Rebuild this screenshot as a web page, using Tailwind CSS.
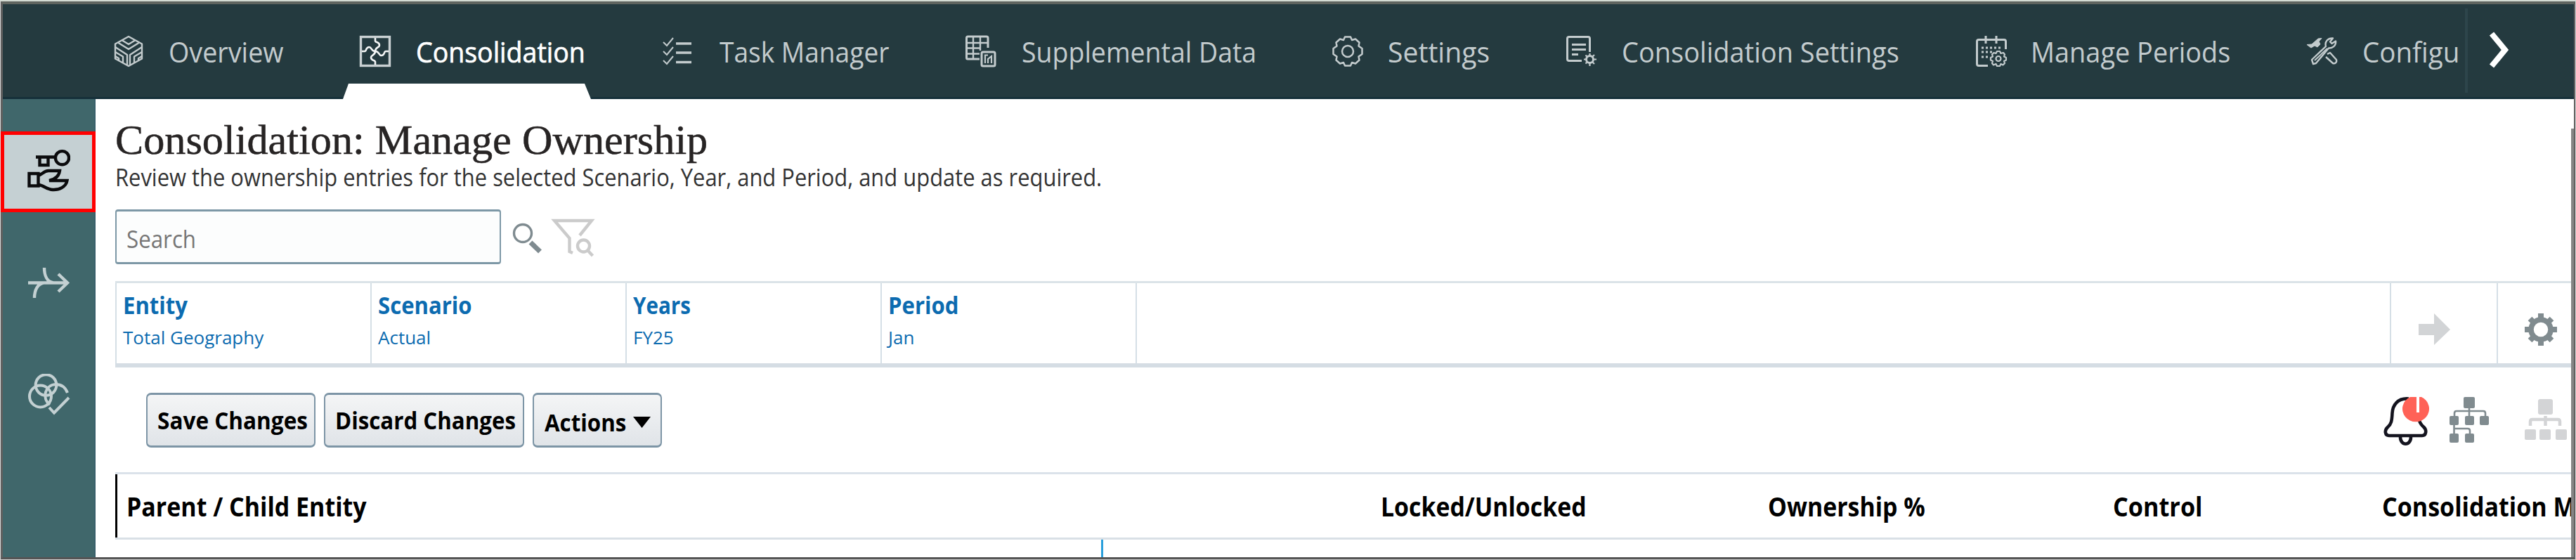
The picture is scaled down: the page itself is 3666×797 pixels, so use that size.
<!DOCTYPE html>
<html lang="en">
<head>
<meta charset="utf-8">
<title>Consolidation: Manage Ownership</title>
<script src="https://cdn.jsdelivr.net/npm/@tailwindcss/browser@4"></script>
</head>
<body class="bg-white">
<div class="w-[3666px] h-[797px] overflow-hidden border-t-2 border-t-[#d3dbd3] border-b border-b-[#d0d0d0] border-l border-l-[#d8d8d8] border-r border-r-[#d8d8d8] font-['Open_Sans',sans-serif] whitespace-nowrap">
<div class="h-full flex flex-col border-t-[4px] border-t-[#5f645f] border-b-[3px] border-b-[#555555] border-l-[3px] border-l-[#606060] border-r-2 border-r-[#606060]">

  <!-- Top navigation -->
  <header class="relative flex-none h-[135px] flex bg-[#243a3f] border-b-[3px] border-b-[#16303a] text-[41px] text-[#c3cbcd]">
    <nav class="flex-none w-[3497px] pl-[156px] flex items-center overflow-hidden pt-[2px]">
      <a class="flex-none w-[351px] flex items-center">
        <svg class="flex-none w-[46px] h-[46px]" viewBox="0 0 46 46" fill="none" stroke="currentColor" stroke-width="2.4" stroke-linejoin="round"><path d="M23 2 42 12.500V33.500L23 44 4 33.500V12.500Z"/><path d="M14 7.500 23 13 32 7.500M8.500 11 23 20 37.500 11M4 17 21 28V43M42 17 25 28V43M4 24 15 30.500V39M42 24 31 30.500V39M4 30 9 33V36M42 30 37 33V36"/></svg>
        <span class="ml-[34px] leading-none origin-left scale-x-[.92]">Overview</span>
      </a>
      <a class="flex-none w-[429px] flex items-center text-white">
        <svg class="flex-none w-[46px] h-[46px] text-[#c9d0d2]" viewBox="0 0 46 46" fill="none" stroke="currentColor"><rect x="2.500" y="2.500" width="41" height="41" stroke-width="3.400"/><g stroke="#f4f6f6" stroke-width="2.600"><path d="M23 4V8C23 11 29 9 29 14.500C29 18 23 17 23 23"/><path d="M23 4V8C23 11 29 9 29 14.500C29 18 23 17 23 23" transform="rotate(90 23 23)"/><path d="M23 4V8C23 11 29 9 29 14.500C29 18 23 17 23 23" transform="rotate(180 23 23)"/><path d="M23 4V8C23 11 29 9 29 14.500C29 18 23 17 23 23" transform="rotate(270 23 23)"/></g></svg>
        <span class="ml-[35px] leading-none origin-left scale-x-[.915] [-webkit-text-stroke:0.7px_white]">Consolidation</span>
      </a>
      <a class="flex-none w-[433px] flex items-center">
        <svg class="flex-none w-[46px] h-[46px]" viewBox="0 0 46 46" fill="none" stroke="currentColor"><path stroke-width="2" d="M4 10 9 15 18 4M4 23 9 28 18 17M4 36 9 41 18 30"/><path stroke-width="3.600" d="M22 12H44M22 25H44M22 38.500H44"/></svg>
        <span class="ml-[38px] leading-none origin-left scale-x-[.905]">Task Manager</span>
      </a>
      <a class="flex-none w-[522px] flex items-center">
        <svg class="flex-none w-[46px] h-[46px]" viewBox="0 0 46 46" fill="none" stroke="currentColor"><path stroke-width="3" d="M21 34H4Q2.500 34 2.500 32V4Q2.500 2 4.500 2H31Q33 2 33 4V18"/><path stroke-width="2.400" d="M3 11H32M3 18.500H23M3 26.500H21M12 3V34M22 3V22"/><rect x="24" y="24" width="19" height="20" rx="2" stroke-width="3"/><path stroke-width="2.200" d="M29 40V28.500H33M33 40V34L38 30V40"/></svg>
        <span class="ml-[35px] leading-none origin-left scale-x-[.914]">Supplemental Data</span>
      </a>
      <a class="flex-none w-[332px] flex items-center">
        <svg class="flex-none w-[46px] h-[46px]" viewBox="0 0 46 46" fill="none" stroke="currentColor" stroke-width="2.500" stroke-linejoin="round"><circle cx="23" cy="23" r="8"/><path d="M19 2.500H27L29 7 34 5.500 39.500 10.500 38.500 15.500 43.500 19V27L38.500 30.500 39.500 35.500 34 40.500 29 39 27 43.500H19L17 39 12 40.500 6.500 35.500 7.500 30.500 2.500 27V19L7.500 15.500 6.500 10.500 12 5.500 17 7Z"/></svg>
        <span class="ml-[34px] leading-none origin-left scale-x-[.955]">Settings</span>
      </a>
      <a class="flex-none w-[584px] flex items-center">
        <svg class="flex-none w-[46px] h-[46px]" viewBox="0 0 46 46" fill="none" stroke="currentColor"><path stroke-width="3" d="M24 36.500H6Q3.500 36.500 3.500 34V5Q3.500 2.500 6 2.500H33Q35.500 2.500 35.500 5V24"/><path stroke-width="3" d="M10 13.500H30M10 20.500H30M10 27.500H19"/><circle cx="35.500" cy="34.500" r="5" stroke-width="3"/><path stroke-width="2.200" d="M35.500 26V29M35.500 40V44M27 34.500H30M41 34.500H45M29.500 28.500 32 31M39 38 42 41M29.500 40.500 32 38M39 31 42 28"/></svg>
        <span class="ml-[35px] leading-none origin-left scale-x-[.927]">Consolidation Settings</span>
      </a>
      <a class="flex-none w-[471px] flex items-center">
        <svg class="flex-none w-[46px] h-[46px]" viewBox="0 0 46 46" fill="none" stroke="currentColor"><path stroke-width="3" d="M18 43.500H5Q2.500 43.500 2.500 41V9Q2.500 6.500 5 6.500H41Q43.500 6.500 43.500 9V20M15 1V12M30 1V12"/><path stroke-width="3" stroke-dasharray="3 3" d="M9 18H37M9 24H24M9 31H20"/><circle cx="33" cy="33.500" r="3.500" stroke-width="2.200"/><path stroke-width="2.200" stroke-linejoin="round" d="M31 23H35L36.500 26 40 25 42 27.500 41 30.500 44 32V35.500L41 37 42 40 39.500 42.500 36.500 41 35 44H31L29.500 41 26 42.500 24 40 25 37 22 35.500V32L25 30.500 24 27.500 26.500 25 29.500 26Z"/></svg>
        <span class="ml-[33px] leading-none origin-left scale-x-[.924]">Manage Periods</span>
      </a>
      <a class="flex-none flex items-center">
        <svg class="flex-none w-[46px] h-[46px]" viewBox="0 0 46 46" fill="none" stroke="currentColor" stroke-width="2.400" stroke-linejoin="round"><path fill="currentColor" stroke-width="1" d="M1 13.500 8 13 17 5 22 4.500 18 9 20 13 16 17 12 15 7 18Z"/><path d="M10 41 8 35 28 16C26 9 31 4 38 4.500L34 9.500 36.500 12 42 8.500C43 15 37 19 32 18.500L14 40Z"/><path d="M30 27 34 25 43 35C44 39 41 41 38 40L28 31"/><path stroke-width="2" d="M12 36 30 19"/></svg>
        <span class="w-[139px] ml-[34px] leading-none origin-left scale-x-[.94]">Configu</span>
      </a>
    </nav>
    <div class="flex-none w-[7px]"></div>
    <div class="flex-none w-[4px] my-[6px] bg-[#2d454b]"></div>
    <svg class="flex-none ml-[27px] mt-[38px] w-[38px] h-[54px]" viewBox="0 0 38 54" fill="none" stroke="white" stroke-width="8"><path d="M7 4 26 27 7 50"/></svg>
    <!-- Active tab notch -->
    <svg class="absolute left-[484px] -bottom-[3px] w-[353px] h-[22px]" viewBox="0 0 353 22"><path fill="white" d="M8 0H344L353 22H0Z"/></svg>
  </header>

  <div class="flex-1 min-h-0 flex">
    <!-- Side bar -->
    <aside class="flex-none w-[132px] bg-[#40676b] border-r-2 border-r-[#38606a]">
      <div class="relative -ml-[3px] mt-[46px] w-[135px] h-[115px] bg-[#c5d0d3] border-[5px] border-[#ff0000] pt-[18px] pl-[30px]">
        <svg class="w-[64px] h-[64px]" viewBox="36 210 64 64" fill="none" stroke="#0b0b0d" stroke-width="4.400"><circle cx="88.500" cy="224.700" r="9.600"/><path d="M51 223.500H79M56.500 224V235H68.500V224M41.500 247H54.500V264.500H41.500ZM54.500 249.500C60 249 62 243 69 243H85C84 251 79 255 70 257H95.500C94 266 84 270.500 75 270C66 269.500 62 263.500 54.500 263"/></svg>
      </div>
      <svg class="ml-[32px] mt-[68px] w-[64px] h-[64px]" viewBox="36 370 64 64" fill="none" stroke="#c3d0d2" stroke-width="4.400"><path d="M40 402.500H96M83 390 96 402.500 83 415M63 381C63 392 67 401 76 402.500M49 424C49 412 54 404 62 402.500"/></svg>
      <svg class="ml-[32px] mt-[98px] w-[66px] h-[64px]" viewBox="36 532 66 64" fill="none" stroke="#c3d0d2" stroke-width="4"><circle cx="65.500" cy="548" r="14.800"/><circle cx="57.500" cy="564" r="15.500"/><path d="M71 576C59 567 64 548 79 547C88 547 93 551 96 559M70 580 77 587.500 98 566"/></svg>
    </aside>

    <!-- Content -->
    <main class="flex-1 min-w-0 pl-[28px] pt-[24px] flex flex-col overflow-hidden">
      <h1 class="flex-none h-[68px] leading-[68px] text-[60px] text-[#272424] font-['Liberation_Serif',serif] origin-left scale-x-[1.004] [-webkit-text-stroke:0.5px_#272424]">Consolidation: Manage Ownership</h1>
      <p class="flex-none h-[38px] leading-[38px] text-[34px] text-[#333333] origin-left scale-x-[.909]">Review the ownership entries for the selected Scenario, Year, and Period, and update as required.</p>

      <div class="flex-none mt-[27px] flex h-[78px]">
        <div class="w-[549px] h-[78px] rounded-[4px] border-[3px] border-x-2 border-[#7d98a6] bg-[#fcfdfd] pl-[14px] flex items-center pt-[6px] text-[34px] text-[#767676]"><span class="origin-left scale-x-[.92]">Search</span></div>
        <svg class="ml-[16px] mt-[16px] w-[44px] h-[50px]" viewBox="729 314 44 50" fill="none" stroke="#7f8b90"><circle cx="744" cy="332" r="12.500" stroke-width="3.400"/><path stroke-width="7" d="M755 345 768.500 358"/></svg>
        <svg class="ml-[10px] mt-[10px] w-[66px] h-[60px]" viewBox="783 308 66 60" fill="none" stroke="#cbcbcb" stroke-width="4.400"><path d="M825 335 842 314H789L810.500 339V358L815 360"/><circle cx="830.500" cy="350" r="8.500"/><path d="M836 356 843.500 364"/></svg>
      </div>

      <!-- Point of view bar -->
      <section class="flex-none mt-[24px] h-[123px] flex border-t-[3px] border-t-[#dbe3e8] border-b-[6px] border-b-[#d5dde4] text-[#0c6bb0]">
        <div class="flex-none w-[363px] border-l-2 border-[#d5dfe6] pl-[9px] pt-[11px]"><div class="h-[40px] leading-[40px] text-[34px] font-bold origin-left scale-x-[.915]">Entity</div><div class="mt-[8px] h-[36px] leading-[36px] text-[26px]">Total Geography</div></div>
        <div class="flex-none w-[363px] border-l-2 border-[#d5dfe6] pl-[9px] pt-[11px]"><div class="h-[40px] leading-[40px] text-[34px] font-bold origin-left scale-x-[.915]">Scenario</div><div class="mt-[8px] h-[36px] leading-[36px] text-[26px]">Actual</div></div>
        <div class="flex-none w-[363px] border-l-2 border-[#d5dfe6] pl-[9px] pt-[11px]"><div class="h-[40px] leading-[40px] text-[34px] font-bold origin-left scale-x-[.87]">Years</div><div class="mt-[8px] h-[36px] leading-[36px] text-[26px]">FY25</div></div>
        <div class="flex-none w-[363px] border-l-2 border-[#d5dfe6] pl-[9px] pt-[11px]"><div class="h-[40px] leading-[40px] text-[34px] font-bold origin-left scale-x-[.915]">Period</div><div class="mt-[8px] h-[36px] leading-[36px] text-[26px]">Jan</div></div>
        <div class="flex-none w-[1785px] border-l-2 border-[#d5dfe6]"></div>
        <div class="flex-none w-[152px] border-l-2 border-[#d5dfe6] pl-[38px] pt-[42px]">
          <svg class="w-[48px] h-[48px]" viewBox="0 0 48 48"><path fill="#d2d4d6" d="M1 16H23V1L46 24 23 46V32H1Z"/></svg>
        </div>
        <div class="flex-none border-l-2 border-[#d5dfe6] pl-[37px] pt-[42px]">
          <svg class="w-[48px] h-[48px]" viewBox="-24 -24 48 48" fill="none" stroke="#808b8f"><circle r="14" stroke-width="7.500"/><path stroke-width="8" d="M0-23V-15M0 23V15M-23 0H-15M23 0H15M-15.500-15.500-11-11M15.500 15.500 11 11M-15.500 15.500-11 11M15.500-15.500 11-11"/></svg>
        </div>
      </section>

      <!-- Toolbar -->
      <div class="flex-none mt-[36px] h-[78px] pl-[44px] flex gap-[12px] text-[34px] font-bold text-black">
        <button class="flex-none w-[241px] h-[78px] rounded-[7px] border-[3px] border-x-2 border-[#7d95a6] bg-linear-to-b from-[#f4f5f6] to-[#e0e4e8] pl-[14px] flex items-center"><span class="origin-left scale-x-[.928]">Save Changes</span></button>
        <button class="flex-none w-[285px] h-[78px] rounded-[7px] border-[3px] border-x-2 border-[#7d95a6] bg-linear-to-b from-[#f4f5f6] to-[#e0e4e8] pl-[14px] flex items-center"><span class="origin-left scale-x-[.92]">Discard Changes</span></button>
        <button class="flex-none w-[184px] h-[78px] rounded-[7px] border-[3px] border-x-2 border-[#7d95a6] bg-linear-to-b from-[#f4f5f6] to-[#e0e4e8] pl-[15px] flex items-center"><span class="w-[126px] pt-[6px] origin-left scale-x-[.92] text-left">Actions</span><svg class="flex-none w-[25px] h-[16px] mt-[6px]" viewBox="0 0 25 16"><path d="M0 0H25L12.500 16Z"/></svg></button>
        <div class="flex-1"></div>
        <svg class="flex-none mt-px w-[66px] h-[76px]" viewBox="26 20 66 76" fill="none" stroke="#14141f" stroke-width="4.600"><path d="M62 27.500C46 26 39 37 38.500 48C38 59 37 64 32 68C27 72.500 28 80 34 80H81C87 80 88 72 83 67.500C79 64 77 60 76.500 56M50 82C50 95 65 95 65 82"/><path fill="#ff6257" stroke="none" d="M64 25A19 18.500 0 1 0 80 25Z"/><path fill="white" stroke="none" d="M73 23H77V47H73Z"/></svg>
        <svg class="flex-none ml-[14px] mt-px w-[60px] h-[76px]" viewBox="118 20 60 76" fill="#808b8f"><path fill="none" stroke="#808b8f" stroke-width="2.600" d="M148 38V54M127 54V48Q127 45 130 45H168Q171 45 171 48V54M126.500 62V80M126.500 70H146Q149 70 149 73V80"/><rect x="140" y="25" width="16" height="16" rx="2"/><rect x="120" y="52" width="13" height="13" rx="2"/><rect x="142" y="52" width="13" height="13" rx="2"/><rect x="163" y="52" width="13" height="13" rx="2"/><rect x="120" y="77" width="13" height="13" rx="2"/><rect x="142" y="77" width="13" height="13" rx="2"/></svg>
        <svg class="flex-none ml-[36px] mr-[3px] mt-px w-[64px] h-[76px]" viewBox="226 20 64 76" fill="#d3d4d6"><path fill="none" stroke="#d3d4d6" stroke-width="4.500" d="M235 66V60Q235 57 238 57H274Q277 57 277 60V66M256.500 52V66"/><rect x="246" y="28" width="21" height="22" rx="3"/><rect x="227" y="71" width="16" height="15" rx="2"/><rect x="248" y="71" width="16" height="15" rx="2"/><rect x="271" y="71" width="16" height="15" rx="2"/></svg>
      </div>

      <!-- Grid header -->
      <div class="flex-none mt-[35px] h-[96px] border-t-[3px] border-t-[#dbe2ea] border-b-[3px] border-b-[#d9e0e6] flex items-center text-[37px] font-bold text-black overflow-hidden">
        <div class="flex-none self-stretch w-[3px] bg-black"></div>
        <div class="flex-none w-[1798px] pt-[2px] pl-[13px]"><div class="origin-left scale-x-[.918]">Parent / Child Entity</div></div>
        <div class="flex-none w-[551px] pt-[2px]"><div class="origin-left scale-x-[.914]">Locked/Unlocked</div></div>
        <div class="flex-none w-[491px] pt-[2px]"><div class="origin-left scale-x-[.915]">Ownership %</div></div>
        <div class="flex-none w-[383px] pt-[2px]"><div class="origin-left scale-x-[.925]">Control</div></div>
        <div class="flex-none pt-[2px]"><div class="origin-left scale-x-[.92]">Consolidation M</div></div>
      </div>
      <div class="flex-1 pl-[1403px]"><div class="w-[3px] h-full bg-[#2a9fdc]"></div></div>
    </main>
    <div class="flex-none self-end w-[4px] h-[610px] bg-[#858585]"></div>
  </div>
</div>
</div>
</body>
</html>
